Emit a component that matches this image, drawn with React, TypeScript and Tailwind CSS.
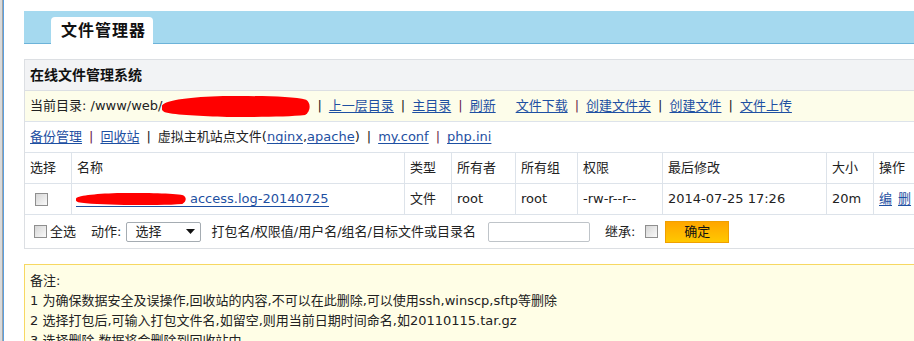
import React from "react";

const FONT = "font-['DejaVu_Sans','Noto_Sans_CJK_SC',sans-serif]";
const LINK = "text-[#1e50a2] underline underline-offset-2";

const Sep = ({ dark }: { dark?: boolean }) => (
  <span className={dark ? "mx-[7px] text-[#6a1b4d]" : "mx-[7px] text-[#222]"}>|</span>
);

// red marker scribble hiding part of the path
const Scribble = ({ w, h }: { w: number; h: number }) => (
  <svg width={w} height={h} viewBox="0 0 150 22" preserveAspectRatio="none" className="shrink-0">
    <path
      d="M0 10 C 4 4, 30 1, 62 0 C 96 0, 132 0, 146 4 C 151 7, 151 16, 145 20 C 128 22, 96 22, 66 22 C 40 21, 14 20, 3 17 C -1 15, -1 12, 0 10 Z"
      fill="#ff0000"
    />
  </svg>
);

const Checkbox = () => (
  <span className="inline-block w-[13px] h-[13px] shrink-0 border border-[#8f8f8f] bg-gradient-to-br from-[#d6d6d6] to-[#fafafa]" />
);

const cols = ["选择", "名称", "类型", "所有者", "所有组", "权限", "最后修改", "大小", "操作"];

export default function App() {
  return (
    <div className={`flex h-screen overflow-hidden bg-white text-[13px] text-[#222] ${FONT}`}>
      <div className="w-[3px] shrink-0 bg-[#dadada] border-r border-[#a3a3a3]" />
      <div className="w-px shrink-0 bg-[#5a9fe0]" />

      <div className="ml-[20px] pt-[11px] w-[940px] shrink-0">
        <div className="h-[33px] bg-[#a5d9ef] border-b border-[#6cb3d9] pl-[27px] flex items-end">
          <div className="w-[102px] h-[27px] -mb-px bg-white rounded-t-[4px] flex items-center pl-[10px] text-[16px] font-bold tracking-[1px] text-[#111]">
            文件管理器
          </div>
        </div>

        <div className="mt-[15px] border-l border-t border-b border-[#dcdfe3]">
          <div className="h-[31px] bg-[#f2f3f5] border-b border-[#dcdfe3] flex items-center pl-[5px] text-[14px] font-bold text-[#111]">
            在线文件管理系统
          </div>

          <div className="h-[31px] bg-[#fdfdea] border-b border-[#dde3ea] flex items-center pl-[5px] whitespace-nowrap">
            <span>当前目录: /www/web/</span>
            <Scribble w={148} h={21} />
            <Sep />
            <a className={LINK}>上一层目录</a>
            <Sep />
            <a className={LINK}>主目录</a>
            <Sep dark />
            <a className={LINK}>刷新</a>
            <a className={`${LINK} ml-[20px]`}>文件下载</a>
            <Sep dark />
            <a className={LINK}>创建文件夹</a>
            <Sep />
            <a className={LINK}>创建文件</a>
            <Sep />
            <a className={LINK}>文件上传</a>
          </div>

          <div className="h-[31px] border-b border-[#dde3ea] flex items-center pl-[5px] whitespace-nowrap">
            <a className={LINK}>备份管理</a>
            <Sep dark />
            <a className={LINK}>回收站</a>
            <Sep />
            <span>
              虚拟主机站点文件(<a className={LINK}>nginx</a>,<a className={LINK}>apache</a>)
            </span>
            <Sep />
            <a className={LINK}>my.conf</a>
            <Sep dark />
            <a className={LINK}>php.ini</a>
          </div>

          <div className="grid grid-cols-[47px_333px_47px_64px_62px_85px_164px_47px_60px]">
            {cols.map((c) => (
              <div key={c} className="h-[31px] border-r border-b border-[#dde3ea] flex items-center px-[5px]">
                {c}
              </div>
            ))}

            <div className="h-[31px] border-r border-b border-[#dde3ea] flex items-center pl-[10px]">
              <Checkbox />
            </div>
            <div className="h-[31px] border-r border-b border-[#dde3ea] flex items-center px-[4px]">
              <a className="flex items-center border-b border-[#1e50a2] text-[#1e50a2] leading-[15px]">
                <Scribble w={110} h={12} />
                <span className="ml-[4px]">access.log-20140725</span>
              </a>
            </div>
            <div className="h-[31px] border-r border-b border-[#dde3ea] flex items-center px-[5px]">文件</div>
            <div className="h-[31px] border-r border-b border-[#dde3ea] flex items-center px-[5px]">root</div>
            <div className="h-[31px] border-r border-b border-[#dde3ea] flex items-center px-[5px]">root</div>
            <div className="h-[31px] border-r border-b border-[#dde3ea] flex items-center px-[5px]">-rw-r--r--</div>
            <div className="h-[31px] border-r border-b border-[#dde3ea] flex items-center px-[5px]">2014-07-25 17:26</div>
            <div className="h-[31px] border-r border-b border-[#dde3ea] flex items-center px-[5px]">20m</div>
            <div className="h-[31px] border-r border-b border-[#dde3ea] flex items-center px-[5px] gap-[6px]">
              <a className={LINK}>编</a>
              <a className={LINK}>删</a>
            </div>
          </div>

          <div className="h-[33px] flex items-center pl-[9px] whitespace-nowrap">
            <Checkbox />
            <span className="ml-[3px]">全选</span>
            <span className="ml-[15px]">动作:</span>
            <div className="ml-[5px] w-[75px] h-[20px] border border-[#a5acb2] rounded-[2px] bg-white flex items-center justify-between pl-[8px] pr-[5px]">
              <span className="leading-none">选择</span>
              <svg width="9" height="5" viewBox="0 0 9 5">
                <path d="M0 0 H9 L4.5 5 Z" fill="#111" />
              </svg>
            </div>
            <span className="ml-[10px]">打包名/权限值/用户名/组名/目标文件或目录名</span>
            <div className="ml-[12px] w-[102px] h-[20px] border border-[#bfc4c9] rounded-[2px] bg-white" />
            <span className="ml-[15px]">继承:</span>
            <span className="ml-[10px] flex">
              <Checkbox />
            </span>
            <button className="ml-[7px] w-[64px] h-[22px] border border-[#f0a000] bg-gradient-to-b from-[#ffa600] to-[#ffc800] text-[13px] text-[#111]">
              确定
            </button>
          </div>
        </div>

        <div className="mt-[15px] border-t border-l border-[#f7d862] bg-[#fffee6] pl-[5px] pt-[6px] leading-[20px] whitespace-nowrap">
          <p>备注:</p>
          <p>1 为确保数据安全及误操作,回收站的内容,不可以在此删除,可以使用ssh,winscp,sftp等删除</p>
          <p>2 选择打包后,可输入打包文件名,如留空,则用当前日期时间命名,如20110115.tar.gz</p>
          <p>3 选择删除,数据将会删除到回收站中</p>
        </div>
      </div>
    </div>
  );
}
